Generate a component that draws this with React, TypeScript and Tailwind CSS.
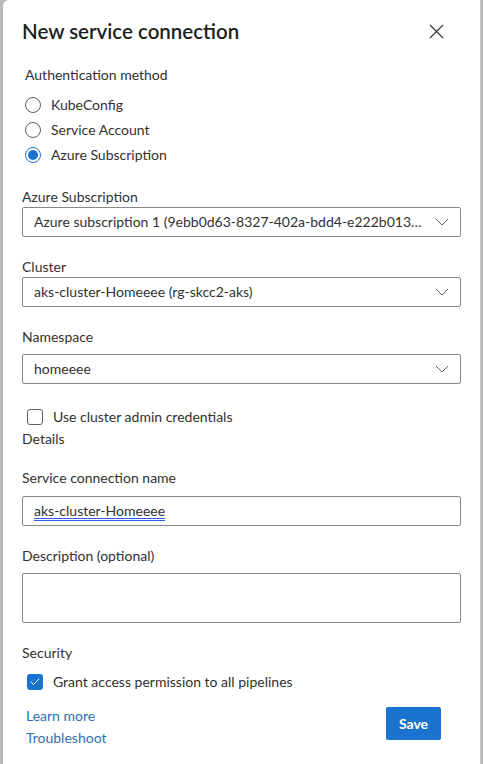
import { Check } from "lucide-react"

const font = { fontFamily: "Lato, 'Noto Sans', sans-serif" }

function Radio({ label, checked }: { label: string; checked?: boolean }) {
  return (
    <div className="flex h-[25px] items-center">
      <span
        className={
          checked
            ? "ml-[3px] flex h-4 w-4 items-center justify-center rounded-full border border-[#1a73cf]"
            : "ml-[3px] h-4 w-4 rounded-full border border-[#605e5c]"
        }
      >
        {checked && <span className="h-[10px] w-[10px] rounded-full bg-[#1a73cf]" />}
      </span>
      <span className="ml-[10px] text-[14px] leading-5 text-[#323130]">{label}</span>
    </div>
  )
}

function Chevron() {
  return (
    <svg width="14" height="8" viewBox="0 0 14 8" className="shrink-0 text-[#605e5c]">
      <polyline points="1,1 7,7 13,1" fill="none" stroke="currentColor" strokeWidth="1" />
    </svg>
  )
}

function Select({ value }: { value: string }) {
  return (
    <div className="flex h-[30px] items-center rounded-[2px] border border-[#8a8886] pl-[11px] pr-[11px]">
      <div className="min-w-0 flex-1 truncate text-[14px] leading-5 text-[#323130]">{value}</div>
      <div className="ml-[10px]">
        <Chevron />
      </div>
    </div>
  )
}

function Label({ children, className }: { children: React.ReactNode; className: string }) {
  return <div className={"text-[14px] leading-5 text-[#323130] " + className}>{children}</div>
}

export default function App() {
  return (
    <div className="flex h-[764px] w-[483px] bg-[#b9b9b9]" style={font}>
      <div className="ml-[3px] flex w-[478px] flex-col rounded-tl-[6px] border-r border-[#c8c8c8] bg-white pl-[19px] pr-[19px]">
        <div className="flex h-[62px] items-center justify-between">
          <h1 className="text-[20.5px] font-semibold text-[#201f1e]">New service connection</h1>
          <svg width="15" height="15" viewBox="0 0 15 15" className="mr-[17px] mt-[1px] text-[#323130]">
            <path d="M1 1 L14 14 M14 1 L1 14" stroke="currentColor" strokeWidth="1.1" fill="none" />
          </svg>
        </div>

        <Label className="ml-[3px] mt-[3px]">Authentication method</Label>
        <div className="mt-[7px] flex flex-col">
          <Radio label="KubeConfig" />
          <Radio label="Service Account" />
          <Radio label="Azure Subscription" checked />
        </div>

        <Label className="mt-[20px]">Azure Subscription</Label>
        <Select value="Azure subscription 1 (9ebb0d63-8327-402a-bdd4-e222b0132f7e)" />

        <Label className="mt-[20px]">Cluster</Label>
        <Select value="aks-cluster-Homeeee (rg-skcc2-aks)" />

        <Label className="mt-[20px]">Namespace</Label>
        <div className="mt-[7px]">
          <Select value="homeeee" />
        </div>

        <div className="mt-[23px] flex h-5 items-center">
          <span className="ml-[5px] h-4 w-4 rounded-[3px] border border-[#605e5c]" />
          <span className="ml-[10px] text-[14px] leading-5 text-[#323130]">Use cluster admin credentials</span>
        </div>
        <Label className="mt-[2px]">Details</Label>

        <Label className="mt-[19px]">Service connection name</Label>
        <div className="mt-[8px] flex h-[30px] items-center rounded-[2px] border border-[#8a8886] pl-[11px]">
          <span className="text-[14px] leading-5 text-[#323130] underline decoration-[#2f5fe8] decoration-double underline-offset-2">
            aks-cluster-Homeeee
          </span>
        </div>

        <Label className="mt-[20px]">Description (optional)</Label>
        <div className="mt-[7px] h-[50px] rounded-[2px] border border-[#8a8886]" />

        <Label className="mt-[20px]">Security</Label>
        <div className="mt-[9px] flex h-5 items-center">
          <span className="ml-[5px] flex h-4 w-4 items-center justify-center rounded-[3px] bg-[#1a73cf]">
            <Check className="h-3 w-3 text-white" strokeWidth={2} />
          </span>
          <span className="ml-[10px] text-[14px] leading-5 text-[#323130]">Grant access permission to all pipelines</span>
        </div>

        <div className="mt-[13px] flex items-start justify-between">
          <div className="ml-[4px] flex flex-col text-[14px] leading-[22px] text-[#2b71b8]">
            <span>Learn more</span>
            <span>Troubleshoot</span>
          </div>
          <button className="mr-[20px] mt-[2px] h-[33px] w-[55px] rounded-[2px] bg-[#1a73cf] text-[14px] font-bold text-white">
            Save
          </button>
        </div>
      </div>
    </div>
  )
}
